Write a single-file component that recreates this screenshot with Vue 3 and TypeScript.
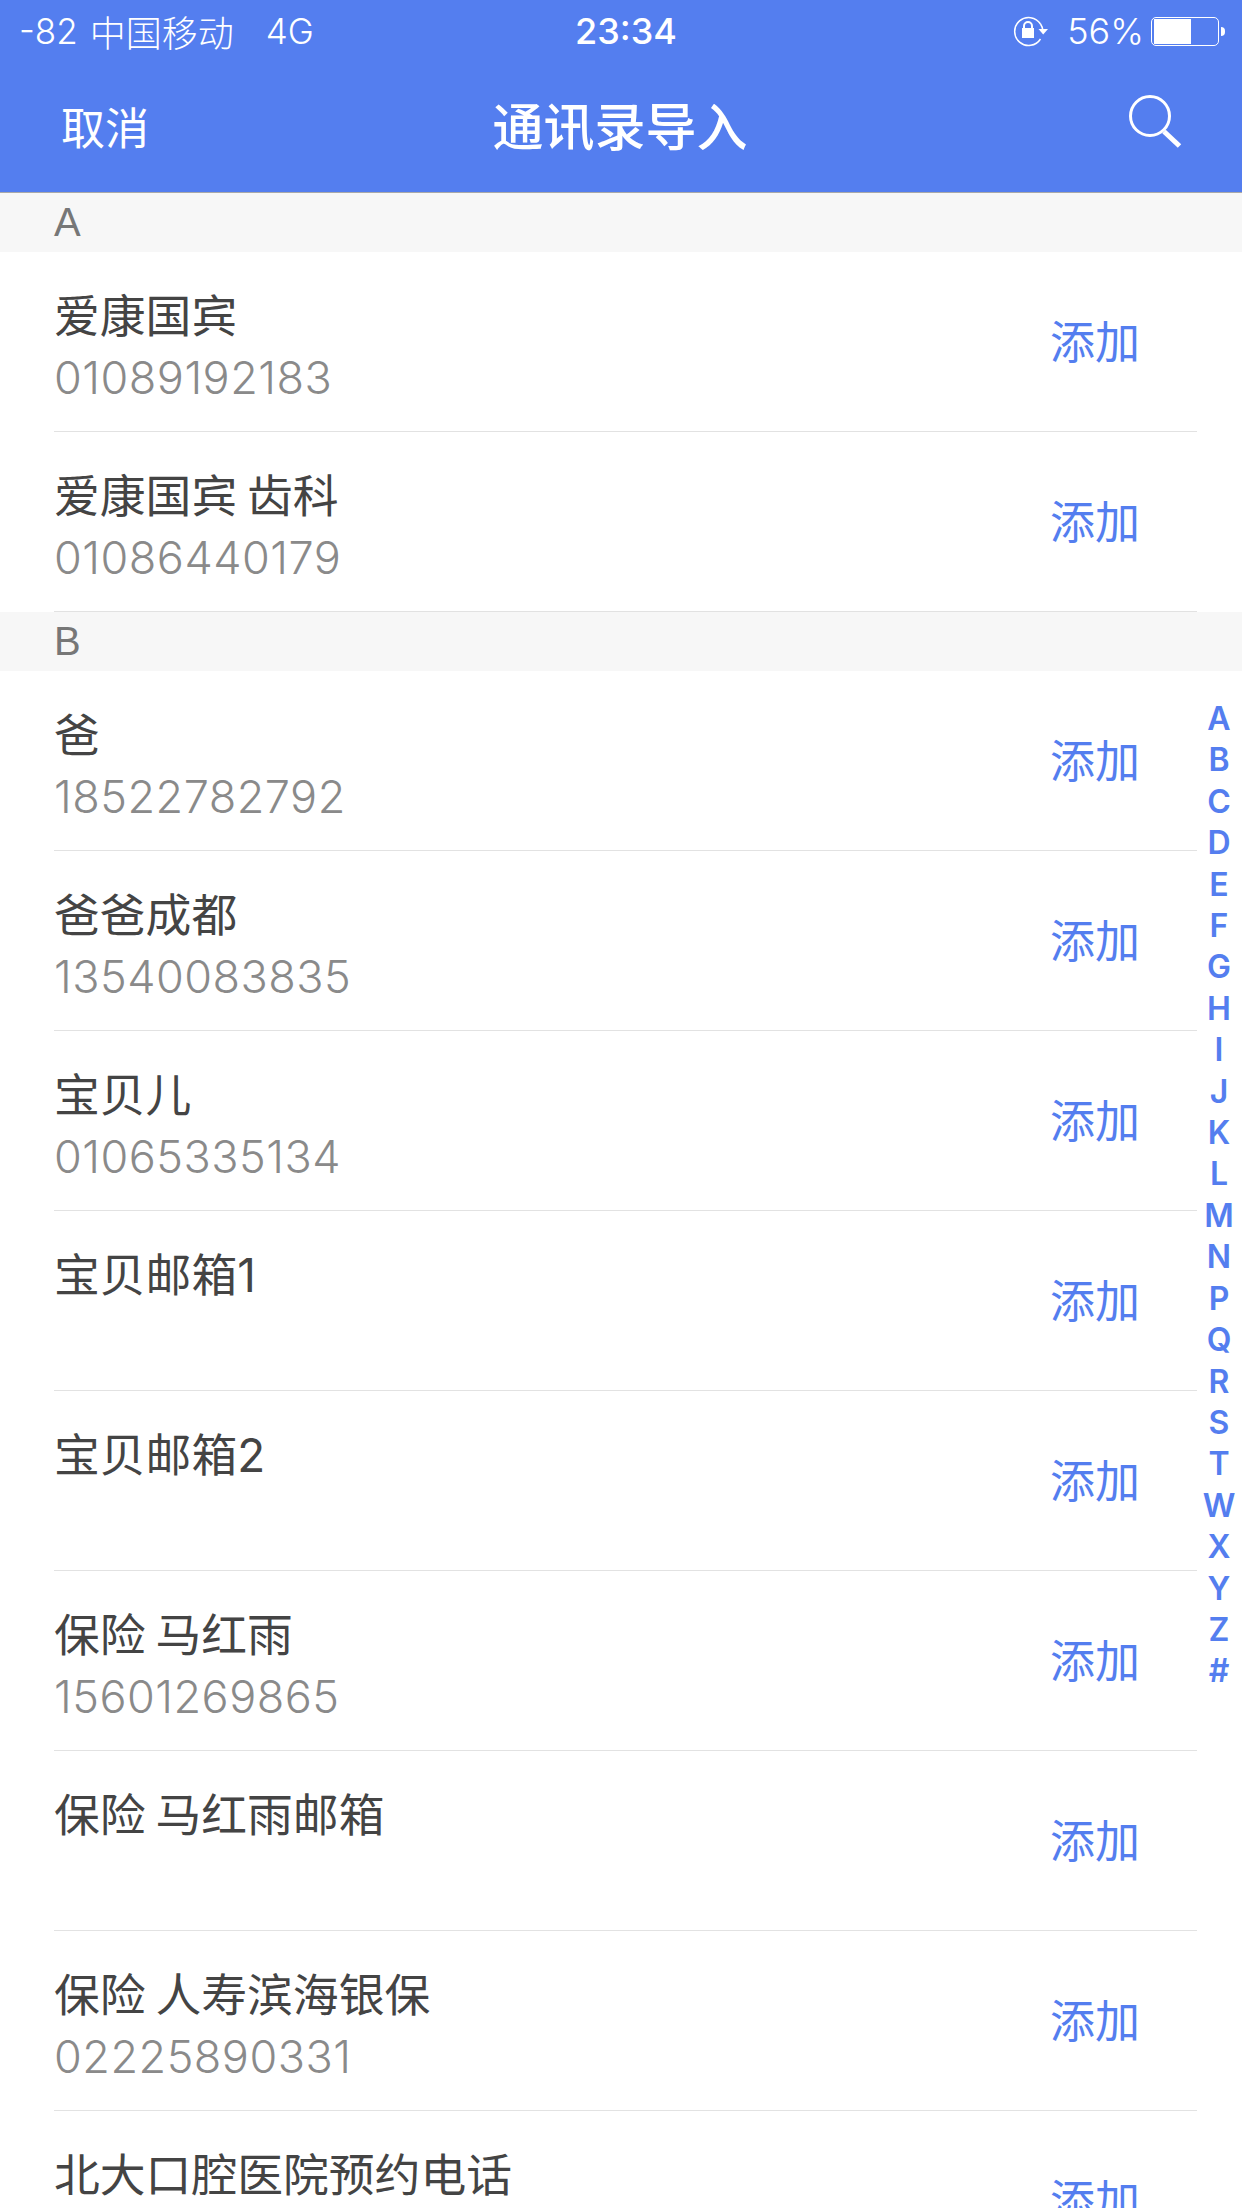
<template>
  <div class="page">
    <header class="top">
      <div class="status">
        <div class="status-left">
          <span>-82</span>
          <span class="carrier">中国移动</span>
          <span class="net">4G</span>
        </div>
        <div class="time">23:34</div>
        <div class="status-right">
          <svg class="lock" width="36" height="32" viewBox="0 0 36 32" fill="none">
            <path d="M27.500 9A14 14 0 1 0 27.500 24" stroke="#fff" stroke-width="1.500" />
            <path d="M27.500 9Q29.500 12 29.800 15" stroke="#fff" stroke-width="1.500" />
            <path d="M25.500 14h9.500l-4.800 5.500z" fill="#fff" />
            <rect x="9" y="13" width="12" height="10" fill="#fff" />
            <path d="M11 13.500v-2.500a4 4 0 0 1 8 0v2.500" stroke="#fff" stroke-width="2" />
          </svg>
          <span class="percent">56%</span>
          <div class="battery">
            <div class="battery-fill" :style="{ width: `${batteryWidth}px` }"></div>
          </div>
          <div class="battery-nub"></div>
        </div>
      </div>
      <nav class="nav">
        <span class="cancel">取消</span>
        <span class="title">通讯录导入</span>
        <svg class="search" width="54" height="54" viewBox="0 0 54 54" fill="none" stroke="#fff">
          <circle cx="21" cy="21" r="19.500" stroke-width="3" />
          <path d="M35 36.500L50.500 51" stroke-width="5" />
        </svg>
      </nav>
    </header>

    <section v-for="group in groups" :key="group.letter">
      <div class="group-head">{{ group.letter }}</div>
      <div v-for="item in group.items" :key="item.name" class="row">
        <div class="info">
          <div class="name">{{ item.name }}</div>
          <div class="phone">{{ item.phone }}</div>
        </div>
        <span class="add">添加</span>
      </div>
    </section>

    <ul class="index">
      <li v-for="letter in letters" :key="letter">{{ letter }}</li>
    </ul>
  </div>
</template>

<script setup lang="ts">
interface Contact {
  name: string
  phone: string
}

interface Group {
  letter: string
  items: Contact[]
}

const batteryWidth = 37

const groups: Group[] = [
  {
    letter: 'A',
    items: [
      { name: '爱康国宾', phone: '01089192183' },
      { name: '爱康国宾 齿科', phone: '01086440179' },
    ],
  },
  {
    letter: 'B',
    items: [
      { name: '爸', phone: '18522782792' },
      { name: '爸爸成都', phone: '13540083835' },
      { name: '宝贝儿', phone: '01065335134' },
      { name: '宝贝邮箱1', phone: '' },
      { name: '宝贝邮箱2', phone: '' },
      { name: '保险 马红雨', phone: '15601269865' },
      { name: '保险 马红雨邮箱', phone: '' },
      { name: '保险 人寿滨海银保', phone: '02225890331' },
      { name: '北大口腔医院预约电话', phone: '' },
    ],
  },
]

const letters = 'ABCDEFGHIJKLMNPQRSTWXYZ#'.split('')
</script>

<style>
html,
body {
  margin: 0;
  background: #fff;
}
</style>

<style scoped>
.page {
  position: relative;
  width: 1242px;
  height: 2208px;
  overflow: hidden;
  background: #fff;
  font-family: Inter, 'Noto Sans CJK SC', sans-serif;
}

.top {
  height: 192px;
  background: #547eef;
  border-bottom: 1px solid #a9a9a9;
  color: #fff;
}

.status {
  display: grid;
  grid-template-columns: 1fr auto 1fr;
  align-items: center;
  height: 62px;
  padding: 0 17px 0 19px;
  font-size: 35px;
  font-weight: 300;
}

.status-left {
  display: flex;
  align-items: center;
}

.carrier {
  margin-left: 12px;
  font-size: 36px;
}

.net {
  margin-left: 32px;
}

.time {
  margin-left: 8px;
  font-size: 36px;
  font-weight: 500;
}

.status-right {
  display: flex;
  align-items: center;
  justify-content: flex-end;
}

.percent {
  margin-left: 18px;
  font-size: 36px;
}

.battery {
  width: 62px;
  height: 25px;
  margin-left: 7px;
  padding: 1px 2px;
  border: 1px solid #fff;
  border-radius: 5px;
}

.battery-fill {
  height: 100%;
  background: #fff;
}

.battery-nub {
  width: 4px;
  height: 9px;
  margin-left: 2px;
  background: #fff;
  border-radius: 0 4px 4px 0;
}

.nav {
  position: relative;
  display: flex;
  align-items: center;
  height: 124px;
  padding: 0 0 0 61px;
}

.cancel {
  margin-top: 4px;
  font-size: 44px;
}

.title {
  position: absolute;
  left: 0;
  right: 2px;
  text-align: center;
  font-size: 51px;
  font-weight: 500;
}

.search {
  position: absolute;
  right: 59px;
  top: 33px;
}

.group-head {
  height: 59px;
  padding-left: 54px;
  line-height: 59px;
  background: #f7f7f7;
  color: #777;
  font-family: 'Liberation Sans', sans-serif;
  font-size: 40px;
}

.row {
  display: flex;
  align-items: center;
  justify-content: space-between;
  height: 179px;
  margin: 0 45px 0 54px;
  border-bottom: 1px solid #e2e2e2;
}

.info {
  align-self: flex-start;
  padding-top: 38px;
}

.name {
  height: 54px;
  line-height: 54px;
  color: #444;
  font-size: 45.8px;
  word-spacing: -3px;
}

.phone {
  height: 56px;
  margin-top: 6px;
  line-height: 56px;
  color: #8a8a8a;
  font-size: 45px;
  font-weight: 300;
  letter-spacing: 0.5px;
}

.add {
  margin-right: 57px;
  margin-bottom: 5px;
  color: #547eef;
  font-size: 45px;
}

.index {
  position: absolute;
  top: 698px;
  right: 0;
  width: 46px;
  margin: 0;
  padding: 0;
  list-style: none;
  text-align: center;
  color: #547eef;
  font-size: 32px;
  font-weight: 600;
  line-height: 41.4px;
}
</style>
